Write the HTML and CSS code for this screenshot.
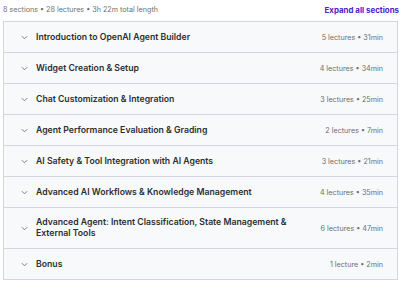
FILE: index.html
```html
<!DOCTYPE html>
<html lang="en">
<head>
    <meta charset="UTF-8">
    <title>Course content</title>
    <link rel="stylesheet" href="styles.css">
</head>
<body>
    <div class="summary">
        <span class="stats">8 sections &bull; 28 lectures &bull; 3h 22m total length</span>
        <a class="expand" href="#">Expand all sections</a>
    </div>

    <div class="sections">
        <div class="section">
            <span class="chevron"><svg viewBox="0 0 8 5" width="7" height="5"><path d="M1 1l3 3 3-3" fill="none" stroke="#2d2f31" stroke-width="1"/></svg></span>
            <span class="title">Introduction to OpenAI Agent Builder</span>
            <span class="meta">5 lectures &bull; 31min</span>
        </div>
        <div class="section">
            <span class="chevron"><svg viewBox="0 0 8 5" width="7" height="5"><path d="M1 1l3 3 3-3" fill="none" stroke="#2d2f31" stroke-width="1"/></svg></span>
            <span class="title">Widget Creation &amp; Setup</span>
            <span class="meta">4 lectures &bull; 34min</span>
        </div>
        <div class="section">
            <span class="chevron"><svg viewBox="0 0 8 5" width="7" height="5"><path d="M1 1l3 3 3-3" fill="none" stroke="#2d2f31" stroke-width="1"/></svg></span>
            <span class="title">Chat Customization &amp; Integration</span>
            <span class="meta">3 lectures &bull; 25min</span>
        </div>
        <div class="section">
            <span class="chevron"><svg viewBox="0 0 8 5" width="7" height="5"><path d="M1 1l3 3 3-3" fill="none" stroke="#2d2f31" stroke-width="1"/></svg></span>
            <span class="title">Agent Performance Evaluation &amp; Grading</span>
            <span class="meta">2 lectures &bull; 7min</span>
        </div>
        <div class="section">
            <span class="chevron"><svg viewBox="0 0 8 5" width="7" height="5"><path d="M1 1l3 3 3-3" fill="none" stroke="#2d2f31" stroke-width="1"/></svg></span>
            <span class="title">AI Safety &amp; Tool Integration with AI Agents</span>
            <span class="meta">3 lectures &bull; 21min</span>
        </div>
        <div class="section">
            <span class="chevron"><svg viewBox="0 0 8 5" width="7" height="5"><path d="M1 1l3 3 3-3" fill="none" stroke="#2d2f31" stroke-width="1"/></svg></span>
            <span class="title">Advanced AI Workflows &amp; Knowledge Management</span>
            <span class="meta">4 lectures &bull; 35min</span>
        </div>
        <div class="section">
            <span class="chevron"><svg viewBox="0 0 8 5" width="7" height="5"><path d="M1 1l3 3 3-3" fill="none" stroke="#2d2f31" stroke-width="1"/></svg></span>
            <span class="title">Advanced Agent: Intent Classification, State Management &amp; External Tools</span>
            <span class="meta">6 lectures &bull; 47min</span>
        </div>
        <div class="section">
            <span class="chevron"><svg viewBox="0 0 8 5" width="7" height="5"><path d="M1 1l3 3 3-3" fill="none" stroke="#2d2f31" stroke-width="1"/></svg></span>
            <span class="title">Bonus</span>
            <span class="meta">1 lecture &bull; 2min</span>
        </div>
    </div>
</body>
</html>
```

FILE: styles.css
```css
body {
    margin: 0;
    padding: 2px 3px 0 3px;
    font-family: Inter, "Noto Sans", sans-serif;
    color: #2d2f31;
    background-color: #ffffff;
}

/* Summary line */
.summary {
    display: flex;
    justify-content: space-between;
    align-items: center;
    height: 15px;
    margin-bottom: 4px;
    margin-right: -2px;
}

.stats {
    font-size: 7.2px;
    color: #6a6f73;
}

.expand {
    font-size: 7.9px;
    font-weight: 700;
    color: #5022c3;
    text-decoration: none;
}

/* Section list */
.sections {
    width: 393px;
    border: 1px solid #d1d7dc;
}

.section {
    display: flex;
    align-items: center;
    min-height: 31px;
    padding: 0 14px 0 17px;
    background-color: #f7f9fa;
    border-bottom: 1px solid #d1d7dc;
    box-sizing: border-box;
}

.section:last-child {
    border-bottom: none;
    min-height: 30px;
}

.chevron {
    display: flex;
    width: 15px;
    flex-shrink: 0;
}

.chevron svg path {
    stroke: #6a6f73;
}

.title {
    flex: 1;
    font-size: 8.7px;
    font-weight: 600;
    line-height: 11px;
    padding: 9px 0;
    padding-right: 20px;
}

.meta {
    font-size: 7.2px;
    color: #6a6f73;
    white-space: nowrap;
}
```
